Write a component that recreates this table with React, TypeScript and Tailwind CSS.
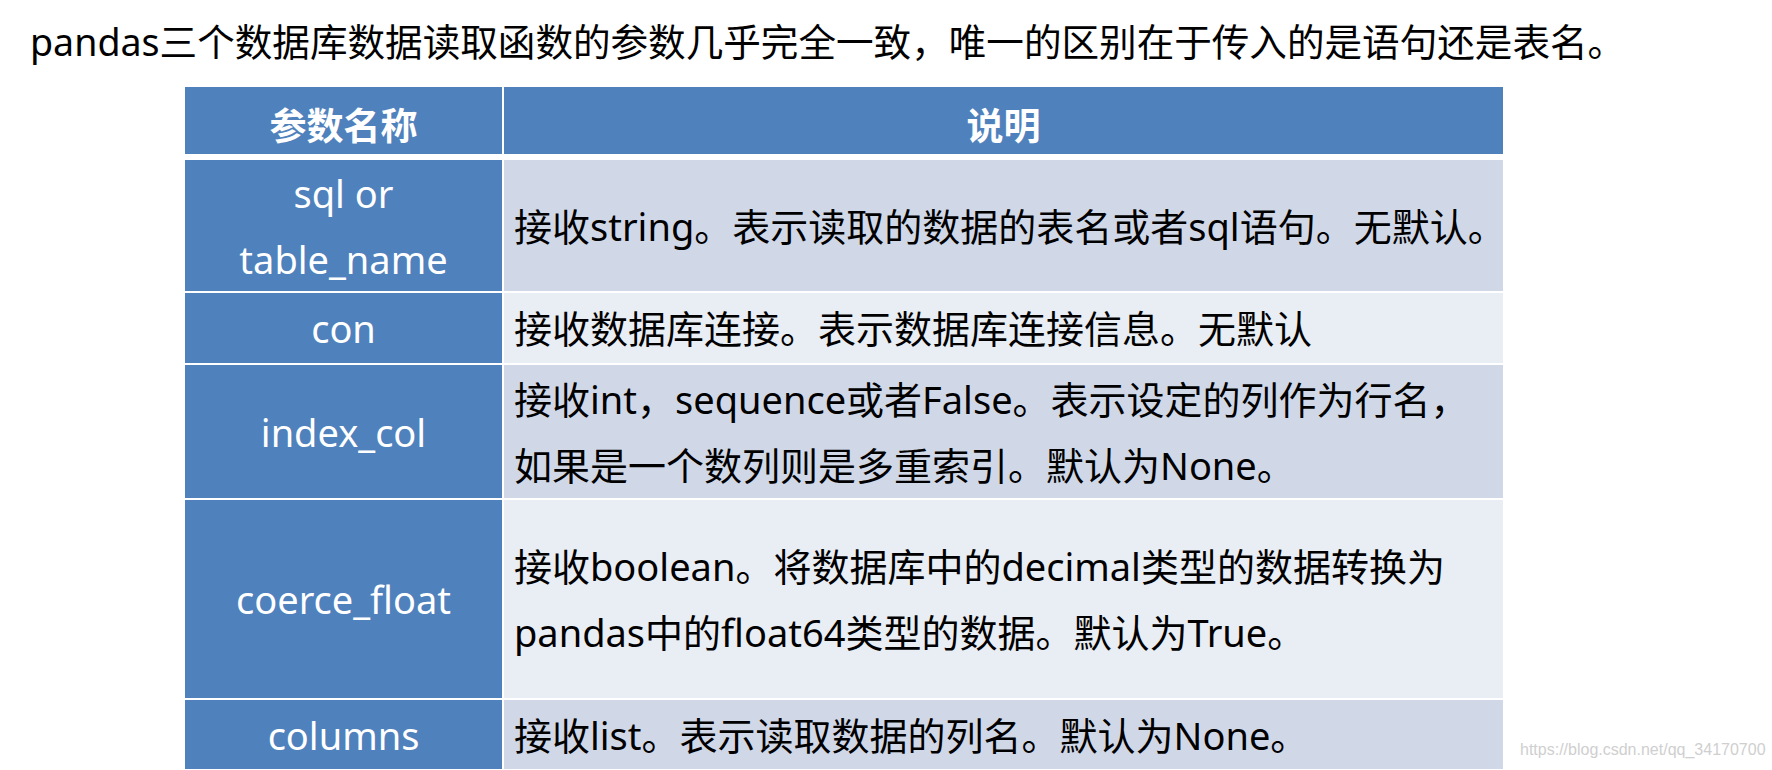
import React from "react";

type Row = {
  name: string[];
  desc: string[];
  rowClass: string;
  descClass: string;
};

const rows: Row[] = [
  {
    name: ["sql or", "table_name"],
    desc: ["接收string。表示读取的数据的表名或者sql语句。无默认。"],
    rowClass: "h-[131px] mt-[6px]",
    descClass: "bg-[#d0d8e8]",
  },
  {
    name: ["con"],
    desc: ["接收数据库连接。表示数据库连接信息。无默认"],
    rowClass: "h-[70px] mt-[2px]",
    descClass: "bg-[#e9edf4]",
  },
  {
    name: ["index_col"],
    desc: [
      "接收int，sequence或者False。表示设定的列作为行名，",
      "如果是一个数列则是多重索引。默认为None。",
    ],
    rowClass: "h-[133px] mt-[2px]",
    descClass: "bg-[#d0d8e8]",
  },
  {
    name: ["coerce_float"],
    desc: [
      "接收boolean。将数据库中的decimal类型的数据转换为",
      "pandas中的float64类型的数据。默认为True。",
    ],
    rowClass: "h-[198px] mt-[2px]",
    descClass: "bg-[#e9edf4]",
  },
  {
    name: ["columns"],
    desc: ["接收list。表示读取数据的列名。默认为None。"],
    rowClass: "h-[69px] mt-[2px]",
    descClass: "bg-[#d0d8e8]",
  },
];

const App: React.FC = () => {
  return (
    <div className="relative w-[1772px] h-[770px] overflow-hidden bg-white font-['Noto_Sans','Noto_Sans_CJK_SC',sans-serif] text-black">
      <div className="pt-[18px] pl-[30px] text-[37.6px] leading-[48px] whitespace-nowrap">
        pandas三个数据库数据读取函数的参数几乎完全一致，唯一的区别在于传入的是语句还是表名。
      </div>

      <div className="mt-[21px] ml-[185px] w-[1318px] flex flex-col">
        {/* header */}
        <div className="flex gap-[2px] h-[67px]">
          <div className="w-[317px] shrink-0 bg-[#4f81bd] flex items-center justify-center pt-[10px] text-white text-[37px] font-bold leading-[48px]">
            参数名称
          </div>
          <div className="flex-1 bg-[#4f81bd] flex items-center justify-center pt-[10px] text-white text-[37px] font-bold leading-[48px]">
            说明
          </div>
        </div>

        {rows.map((row, i) => (
          <div key={i} className={`flex gap-[2px] ${row.rowClass}`}>
            <div className="w-[317px] shrink-0 bg-[#4f81bd] flex flex-col items-center justify-center text-white text-[38px] leading-[66px] whitespace-nowrap">
              {row.name.map((line, j) => (
                <div key={j}>{line}</div>
              ))}
            </div>
            <div
              className={`flex-1 min-w-0 flex flex-col justify-center pl-[10px] text-[38px] leading-[66px] whitespace-nowrap ${row.descClass}`}
            >
              {row.desc.map((line, j) => (
                <div key={j}>{line}</div>
              ))}
            </div>
          </div>
        ))}
      </div>

      {/* watermark */}
      <div className="absolute left-[1520px] top-[741px] text-[16px] leading-[18px] text-[#cfcfcf] font-['Liberation_Sans',sans-serif] whitespace-nowrap">
        https://blog.csdn.net/qq_34170700
      </div>
    </div>
  );
};

export default App;
